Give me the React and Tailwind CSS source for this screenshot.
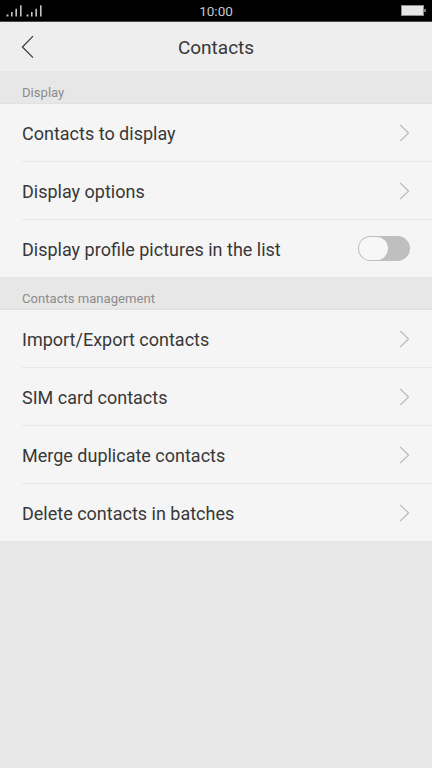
const SECTIONS = [
  {
    title: "Display",
    rows: [
      { label: "Contacts to display" },
      { label: "Display options" },
      { label: "Display profile pictures in the list", toggle: true },
    ],
  },
  {
    title: "Contacts management",
    rows: [
      { label: "Import/Export contacts" },
      { label: "SIM card contacts" },
      { label: "Merge duplicate contacts" },
      { label: "Delete contacts in batches" },
    ],
  },
];

function Signal() {
  return (
    <svg width="16" height="12" viewBox="0 0 16 12" fill="#c4c4c4">
      <rect x="0.5" y="9.5" width="2" height="2" />
      <rect x="5" y="7" width="1.6" height="4.5" />
      <rect x="9.4" y="3.8" width="1.6" height="7.7" />
      <rect x="14" y="0.3" width="1.6" height="11.2" />
    </svg>
  );
}

function Battery() {
  return (
    <svg width="25" height="12" viewBox="0 0 25 12">
      <rect x="0.5" y="0.5" width="22" height="10" fill="#e6e6e6" stroke="#8c8c8c" />
      <rect x="23" y="4" width="2" height="3" fill="#7a7a7a" />
    </svg>
  );
}

function StatusBar() {
  return (
    <div className="relative flex h-[22px] items-center justify-between border-b border-[#4a4a4a] bg-black pl-1.5 pr-1.5">
      <div className="flex gap-1">
        <Signal />
        <Signal />
      </div>
      <span className="absolute inset-x-0 top-[2px] text-center text-[13.5px] leading-[19px] text-[#c8c8c8]">
        10:00
      </span>
      <Battery />
    </div>
  );
}

function Chevron() {
  return (
    <svg width="11" height="18" viewBox="0 0 11 18" fill="none" stroke="#b9b9b9" strokeWidth="1.1">
      <path d="M1.2 1L9.6 9L1.2 17" />
    </svg>
  );
}

function Toggle() {
  return (
    <div className="h-[25px] w-[52px] rounded-full bg-[#bfbfbf] p-px">
      <div className="h-[23px] w-[29px] rounded-full bg-[#f7f7f7]" />
    </div>
  );
}

function Row({ label, toggle, last }) {
  return (
    <div className={`ml-[22px] flex items-center justify-between pr-[22px] ${last ? "h-[57px]" : "h-[58px] border-b border-[#e8e8e8]"}`}>
      <span className="pt-[2px] text-[18px] leading-6 text-[#383838]">{label}</span>
      {toggle ? <Toggle /> : <Chevron />}
    </div>
  );
}

export default function App() {
  return (
    <div className="h-screen w-full overflow-hidden bg-[#e7e7e7] font-['Roboto',sans-serif]">
      <StatusBar />
      <header className="relative flex h-[49px] items-center justify-center bg-[#eeeeee]">
        <svg
          className="absolute left-[21px] top-[13px]"
          width="14"
          height="24"
          viewBox="0 0 14 24"
          fill="none"
          stroke="#383838"
          strokeWidth="1.2"
        >
          <path d="M12 1.2L1.4 12L12 22.6" />
        </svg>
        <h1 className="pt-[2px] text-[19px] leading-6 text-[#383838]">Contacts</h1>
      </header>

      {SECTIONS.map((s) => (
        <section key={s.title}>
          <h2 className="flex h-[33px] items-end border-b border-[#e1e1e1] pl-[22px] text-[13.1px] leading-5 text-[#8c8c8c]">
            {s.title}
          </h2>
          <div className="bg-[#f5f5f5]">
            {s.rows.map((r, i) => (
              <Row key={r.label} {...r} last={i === s.rows.length - 1} />
            ))}
          </div>
        </section>
      ))}
    </div>
  );
}
